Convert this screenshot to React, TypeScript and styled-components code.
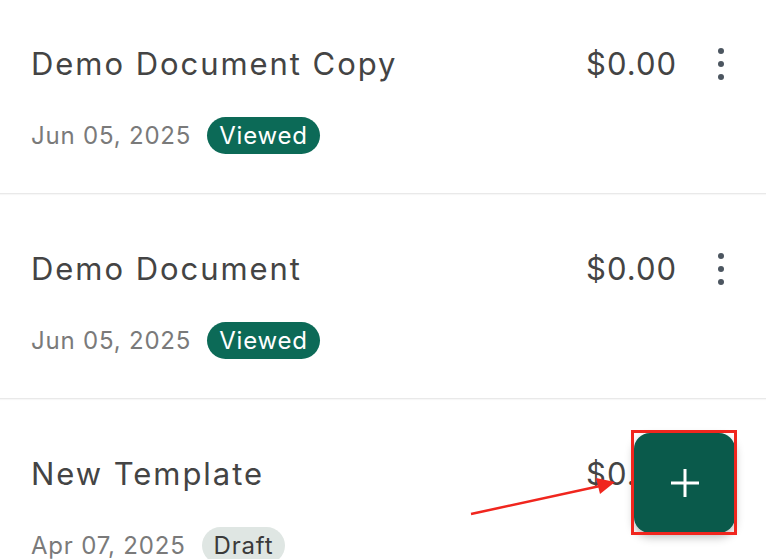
import React from "react";
import styled, { createGlobalStyle } from "styled-components";

const Global = createGlobalStyle`
  html, body { margin: 0; padding: 0; background: #ffffff; overflow: hidden; }
  body { font-family: Inter, "Noto Sans", sans-serif; width: 766px; height: 559px; }
`;

const Screen = styled.div`
  position: relative;
  width: 766px;
  height: 559px;
  overflow: hidden;
  background: #ffffff;
`;

const List = styled.div`
  display: flex;
  flex-direction: column;
  margin-top: -11px;
`;

const Row = styled.div`
  display: flex;
  flex-direction: column;
  gap: 33px;
  padding: 55px 25px 39px 31px;
  border-bottom: 1px solid #e9e9e9;
  box-shadow: 0 1px 1px rgba(0, 0, 0, 0.03);
`;

const TopLine = styled.div`
  display: flex;
  align-items: center;
  height: 40px;
`;

const Title = styled.div`
  flex: 1;
  font-size: 31px;
  line-height: 40px;
  letter-spacing: 1.95px;
  color: #444444;
`;

const Price = styled.div`
  font-size: 31px;
  line-height: 40px;
  letter-spacing: 1px;
  color: #444444;
`;

const MenuButton = styled.button`
  width: 40px;
  height: 40px;
  margin-left: 24px;
  padding: 0;
  border: none;
  background: transparent;
  display: flex;
  align-items: center;
  justify-content: center;
`;

const MetaLine = styled.div`
  display: flex;
  align-items: center;
  gap: 16px;
  height: 37px;
`;

const DateText = styled.span`
  font-size: 24px;
  letter-spacing: 0.8px;
  color: #7a7a7a;
`;

const Badge = styled.span<{ $tone: "viewed" | "draft" }>`
  display: inline-flex;
  align-items: center;
  height: 37px;
  padding: 0 12px;
  border-radius: 19px;
  font-size: 24px;
  letter-spacing: 0.8px;
  background: ${(p) => (p.$tone === "viewed" ? "#0c6a57" : "#dfe6e3")};
  color: ${(p) => (p.$tone === "viewed" ? "#ffffff" : "#3a3a3a")};
`;

const Fab = styled.button`
  position: absolute;
  right: 31px;
  bottom: 26px;
  width: 101px;
  height: 100px;
  border: none;
  border-radius: 16px;
  background: #0a5a4b;
  box-shadow: 0 4px 10px rgba(0, 0, 0, 0.28);
  display: flex;
  align-items: center;
  justify-content: center;
  padding: 0;
`;

const Highlight = styled.div`
  position: absolute;
  left: 631px;
  top: 430px;
  width: 100px;
  height: 99px;
  border: 3px solid #f0261e;
  pointer-events: none;
`;

const ArrowLayer = styled.svg`
  position: absolute;
  left: 0;
  top: 0;
  pointer-events: none;
`;

const Dots = () => (
  <svg width="8" height="34" viewBox="0 0 8 34">
    <circle cx="4" cy="4" r="3" fill="#4c5660" />
    <circle cx="4" cy="17" r="3" fill="#4c5660" />
    <circle cx="4" cy="30" r="3" fill="#4c5660" />
  </svg>
);

type Doc = { title: string; price: string; date: string; status: "Viewed" | "Draft" };

const docs: Doc[] = [
  { title: "Demo Document Copy", price: "$0.00", date: "Jun 05, 2025", status: "Viewed" },
  { title: "Demo Document", price: "$0.00", date: "Jun 05, 2025", status: "Viewed" },
  { title: "New Template", price: "$0.00", date: "Apr 07, 2025", status: "Draft" },
];

export default function App() {
  return (
    <Screen>
      <Global />
      <List>
        {docs.map((d) => (
          <Row key={d.title}>
            <TopLine>
              <Title>{d.title}</Title>
              <Price>{d.price}</Price>
              <MenuButton aria-label="More">
                <Dots />
              </MenuButton>
            </TopLine>
            <MetaLine>
              <DateText>{d.date}</DateText>
              <Badge $tone={d.status === "Viewed" ? "viewed" : "draft"}>{d.status}</Badge>
            </MetaLine>
          </Row>
        ))}
      </List>
      <Fab aria-label="Add">
        <svg width="30" height="30" viewBox="0 0 30 30">
          <path d="M15 1v28M1 15h28" stroke="#ffffff" strokeWidth="3" />
        </svg>
      </Fab>
      <Highlight />
      <ArrowLayer width="766" height="559" viewBox="0 0 766 559">
        <line x1="471" y1="514" x2="600" y2="486" stroke="#f0261e" strokeWidth="2.5" />
        <polygon points="615,482 596,478 600,494" fill="#f0261e" />
      </ArrowLayer>
    </Screen>
  );
}
